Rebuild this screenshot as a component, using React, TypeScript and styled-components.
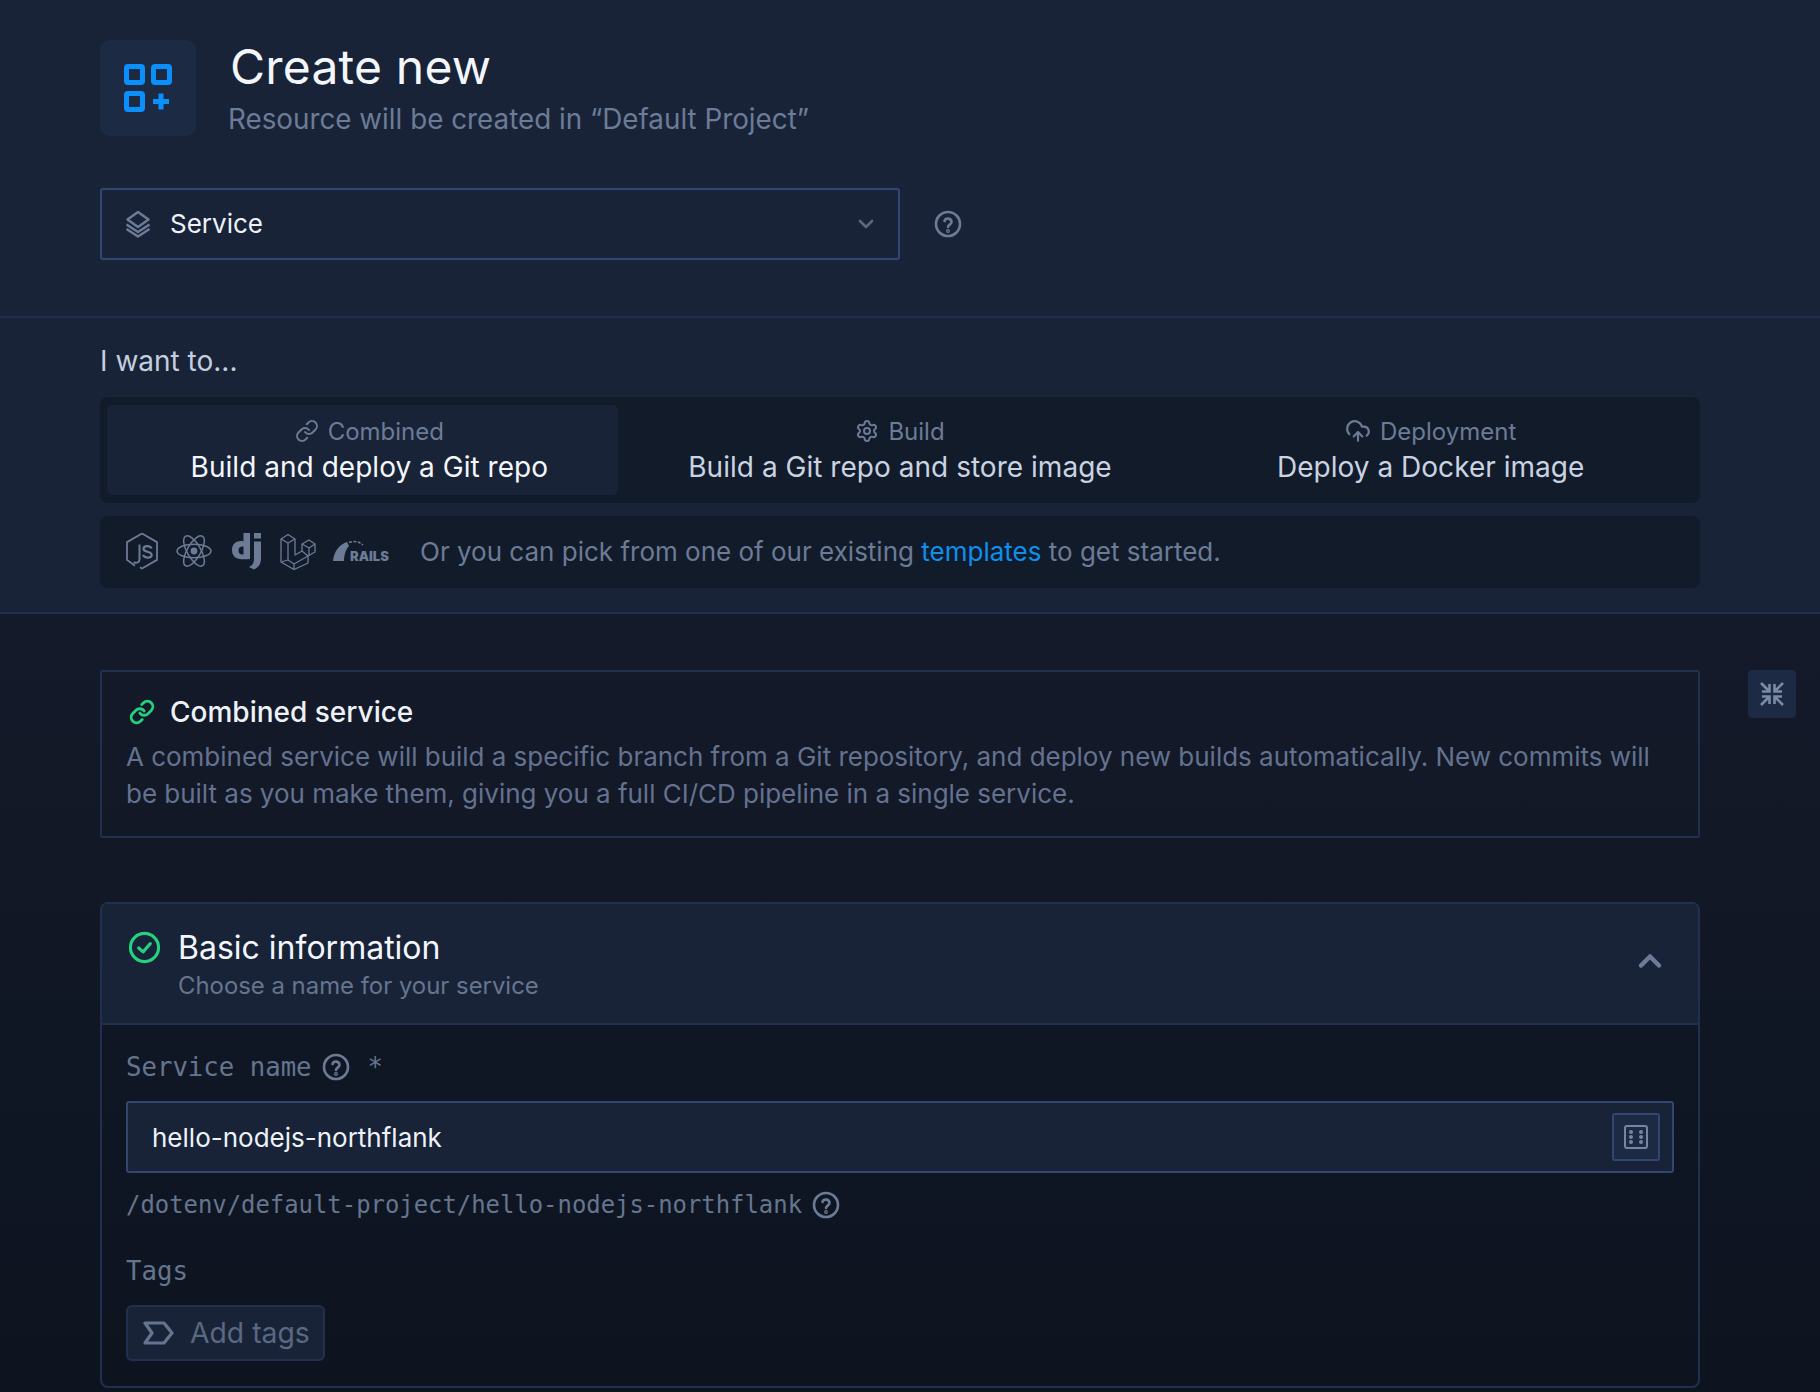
import React, { FC, ReactNode } from "react";
import styled, { createGlobalStyle } from "styled-components";
import { Link as LinkIcon, Settings, CloudUpload, ChevronDown, ChevronUp } from "lucide-react";

const GlobalStyle = createGlobalStyle`
  html, body {
    margin: 0;
    padding: 0;
    background: #0e1521;
    font-family: Inter, "Liberation Sans", sans-serif;
  }
  * { box-sizing: border-box; }
`;

const Page = styled.div`
  width: 1820px;
  height: 1392px;
  overflow: hidden;
  display: flex;
  flex-direction: column;
  background: linear-gradient(180deg, #141a29 612px, #0d1420 1392px);
`;

const TopBand = styled.section`
  background: #182338;
  border-bottom: 2px solid #212f4e;
  padding: 40px 120px 0 100px;
  height: 318px;
`;

const SecondBand = styled.section`
  background: #182338;
  border-bottom: 2px solid #212f4e;
  padding: 25px 120px 0 100px;
  height: 296px;
`;

const Header = styled.header`
  display: flex;
  gap: 32px;
`;

const IconTile = styled.div`
  width: 96px;
  height: 96px;
  border-radius: 10px;
  background: #1c2a43;
  display: flex;
  align-items: center;
  justify-content: center;
`;

const HeaderText = styled.div`
  display: flex;
  flex-direction: column;
`;

const Title = styled.h1`
  margin: -1px 0 0 2px;
  font-size: 48px;
  line-height: 56px;
  font-weight: 400;
  letter-spacing: 0.2px;
  color: #f3f6fb;
`;

const Subtitle = styled.p`
  margin: 6px 0 0;
  font-size: 27.8px;
  line-height: 36px;
  color: #6c7b96;
`;

const SelectRow = styled.div`
  display: flex;
  align-items: center;
  gap: 34px;
  margin-top: 51px;
`;

const Select = styled.div`
  width: 800px;
  height: 72px;
  border: 2px solid #33466f;
  border-radius: 3px;
  display: flex;
  align-items: center;
  padding: 0 22px;
  color: #eef2f8;
  font-size: 26px;
`;

const SelectLabel = styled.span`
  flex: 1;
  margin: -1px 0 0 18px;
`;

const Muted = styled.span`
  display: inline-flex;
  color: #6c7b96;
`;

const SelectChevron = styled(Muted)`
  margin-right: -2px;
  color: #5a6880;
`;

const FormChevron = styled(Muted)`
  margin-top: 16px;
`;

const Prompt = styled.p`
  margin: 0;
  font-size: 28px;
  line-height: 36px;
  color: #c4cede;
`;

const Tabs = styled.div`
  margin-top: 18px;
  height: 106px;
  border-radius: 8px;
  background: #121b2a;
  padding: 8px 4px;
  display: grid;
  grid-template-columns: repeat(3, 1fr);
`;

const Tab = styled.div<{ $active?: boolean }>`
  position: relative;
  isolation: isolate;
  color: ${(p) => (p.$active ? "#f3f6fb" : "#c9d3e2")};
  display: flex;
  flex-direction: column;
  align-items: center;
  padding-top: 9px;

  &::before {
    content: "";
    position: absolute;
    z-index: -1;
    inset: 0 17px 0 3px;
    border-radius: 5px;
    background: ${(p) => (p.$active ? "#182338" : "transparent")};
  }
`;

const TabKind = styled.div`
  display: flex;
  align-items: center;
  gap: 9px;
  height: 34px;
  font-size: 24px;
  color: #6c7b96;
`;

const TabText = styled.div`
  font-size: 28px;
  line-height: 38px;
  letter-spacing: 0.03px;
`;

const TemplatesBar = styled.div`
  margin-top: 13px;
  height: 72px;
  padding: 0 25px 2px;
  border-radius: 8px;
  background: #121b2a;
  display: flex;
  align-items: center;
  color: #6c7b96;
`;

const Logos = styled.div`
  display: flex;
  align-items: center;
  gap: 17px;
  margin-right: 29px;
`;

const TemplatesText = styled.p`
  margin: 0;
  font-size: 26px;
`;

const TemplatesLink = styled.a`
  color: #0d8fee;
`;

const Body = styled.div`
  display: flex;
  gap: 48px;
  padding: 56px 24px 0 100px;
`;

const Column = styled.div`
  width: 1600px;
  display: flex;
  flex-direction: column;
  gap: 64px;
`;

const CollapseButton = styled.div`
  width: 48px;
  height: 48px;
  border-radius: 4px;
  background: #1c2a43;
  display: flex;
  align-items: center;
  justify-content: center;
  color: #7a8aa7;
`;

const InfoCard = styled.div`
  height: 168px;
  border: 2px solid #22304f;
  border-radius: 3px;
  padding: 22px 24px 0;
`;

const InfoHeading = styled.div`
  display: flex;
  align-items: center;
  gap: 15px;
  height: 36px;
  margin: 0 0 9px 3px;
  font-size: 28px;
  font-weight: 500;
  color: #eef2f8;
`;

const InfoText = styled.p`
  margin: 0;
  font-size: 26px;
  line-height: 36.5px;
  letter-spacing: -0.02px;
  color: #647290;
`;

const FormCard = styled.div`
  height: 486px;
  border: 2px solid #22304f;
  border-radius: 8px;
`;

const FormHeader = styled.div`
  height: 121px;
  border-bottom: 2px solid #22304f;
  background: #182338;
  border-radius: 6px 6px 0 0;
  display: flex;
  align-items: flex-start;
  padding: 23px 30px 0 26px;
  gap: 17px;
`;

const CheckSlot = styled.span`
  display: inline-flex;
  margin-top: 4px;
`;

const FormHeaderText = styled.div`
  flex: 1;
`;

const FormTitle = styled.h2`
  margin: 0;
  font-size: 32px;
  line-height: 42px;
  font-weight: 400;
  color: #f3f6fb;
`;

const FormSubtitle = styled.p`
  margin: 0;
  font-size: 23.9px;
  line-height: 33px;
  color: #66758f;
`;

const FormBody = styled.div`
  padding: 27px 24px 0;
`;

const FieldLabel = styled.div`
  display: flex;
  align-items: center;
  gap: 10px;
  height: 30px;
  font-family: "DejaVu Sans Mono", "Liberation Mono", monospace;
  font-size: 25.7px;
  color: #66758f;
`;

const Asterisk = styled.span`
  margin-left: 8px;
`;

const InputBox = styled.div`
  margin-top: 19px;
  height: 72px;
  border: 2px solid #33466f;
  border-radius: 3px;
  background: #182338;
  display: flex;
  align-items: center;
  justify-content: space-between;
  padding: 0 12px 0 24px;
  font-size: 26px;
  color: #eef2f8;
`;

const DiceButton = styled.div`
  width: 48px;
  height: 48px;
  border: 2px solid #33466f;
  border-radius: 3px;
  background: #1c2a43;
  display: flex;
  align-items: center;
  justify-content: center;
  color: #7686a2;
`;

const PathRow = styled.div`
  display: flex;
  align-items: center;
  gap: 10px;
  margin-top: 16px;
  height: 32px;
  font-family: "DejaVu Sans Mono", "Liberation Mono", monospace;
  font-size: 23.9px;
  color: #66758f;
`;

const TagsLabel = styled(FieldLabel)`
  margin-top: 35px;
`;

const AddTags = styled.div`
  margin-top: 19px;
  width: 199px;
  height: 56px;
  border: 2px solid #22304f;
  border-radius: 6px;
  background: #182338;
  display: flex;
  align-items: center;
  gap: 15px;
  padding-left: 15px;
  font-size: 28.3px;
  white-space: nowrap;
  color: #5a6880;

  svg {
    flex-shrink: 0;
  }
`;

const Help: FC = () => (
  <Muted>
    <svg width="28" height="28" viewBox="0 0 28 28" fill="none" stroke="currentColor" strokeWidth="2.6" strokeLinecap="round">
      <circle cx="14" cy="14" r="12" />
      <path d="M10.5 11a3.6 3.6 0 0 1 7 1c0 2.4-3.5 2.8-3.5 5" />
      <circle cx="14" cy="21" r="0.6" />
    </svg>
  </Muted>
);

const CreateIcon = () => (
  <svg width="48" height="48" viewBox="0 0 48 48" fill="none" stroke="#0a90fb" strokeWidth="5">
    <rect x="2.5" y="2.5" width="16" height="16" rx="1.5" />
    <rect x="29.5" y="2.5" width="16" height="16" rx="1.5" />
    <rect x="2.5" y="29.5" width="16" height="16" rx="1.5" />
    <path d="M29 37.5h16M37 29.5v16" />
  </svg>
);

const StackIcon = () => (
  <Muted>
    <svg width="28" height="28" viewBox="0 0 28 28" fill="none" stroke="currentColor" strokeWidth="2.5" strokeLinejoin="round">
      <path d="M14 2l10.5 7.5L14 17 3.5 9.5z" />
      <path d="M2.5 14.5L14 22l11.5-7.5" />
      <path d="M2.5 19L14 26.5 25.5 19" />
    </svg>
  </Muted>
);

const NodeLogo = () => (
  <svg width="34" height="38" viewBox="0 0 34 38" fill="none" stroke="currentColor" strokeWidth="1.8" strokeLinejoin="round">
    <path d="M17 1.5l15 8.6v17.8l-15 8.6-2-1.2" />
    <path d="M10 33.8l-8-5.9V10.1l15-8.6" />
    <path d="M14.5 12.5v15c0 3-2.5 3.5-6 3" strokeWidth="2" />
    <path d="M26.5 16.5c-.8-2.8-7.8-3.6-8 .2-.2 4 8.2 2.2 8.2 6.3 0 3.6-7.2 3.5-8.7-.2" strokeWidth="2.2" />
  </svg>
);

const ReactLogo = () => (
  <svg width="36" height="36" viewBox="-18 -18 36 36" fill="none" stroke="currentColor" strokeWidth="1.5">
    <circle r="3.4" fill="currentColor" stroke="none" />
    <ellipse rx="17" ry="6.8" />
    <ellipse rx="17" ry="6.8" transform="rotate(60)" />
    <ellipse rx="17" ry="6.8" transform="rotate(120)" />
  </svg>
);

const DjangoLogo = () => (
  <svg width="34" height="38" viewBox="0 0 34 38" fill="currentColor" fillRule="evenodd">
    <path d="M14.5 1H21v26c-6 .5-18 2-18-9 0-7 6-10 11.5-8.5zM14.5 14.5c-3-.5-5 1-5 4s2 4.5 5 4z" />
    <path d="M25 1h7v5.5h-7zM25 9.5h7V26c0 6-2 9-7 11.5L20 35c4-2 5-4 5-9z" />
  </svg>
);

const LaravelLogo = () => (
  <svg width="36" height="38" viewBox="0 0 36 38" fill="none" stroke="currentColor" strokeWidth="1.3" strokeLinejoin="round">
    <path d="M1 7l7-4.5L15 7v16l7-4v-7l7-4 6 4v8l-7 4v7l-14 6.5L1 30z" />
    <path d="M1 7l7 4 7-4M8 11v17l6 4 14-8M22 12l7 4 6-4M29 16v8M14 32v5.5M22 19l6 5M8 28l-7 2" />
  </svg>
);

const RailsLogo = () => (
  <svg width="58" height="24" viewBox="0 0 58 24" fill="currentColor">
    <path d="M0 22C1 12 7 5 14 3l2 4c-3 3-5 9-5 15z" />
    <path d="M16 3.5c5-2 10-1 14 2.5" fill="none" stroke="currentColor" strokeWidth="1.5" strokeDasharray="3 1.5" />
    <text x="17" y="22" fontFamily="Inter, sans-serif" fontSize="13" fontWeight="900">
      RAILS
    </text>
  </svg>
);

const CheckCircle = () => (
  <svg width="33" height="33" viewBox="0 0 34 34" fill="none" stroke="#25d17f" strokeWidth="3.2" strokeLinecap="round" strokeLinejoin="round">
    <circle cx="17" cy="17" r="14.5" />
    <path d="M11 17.5l4.5 4L23 13" />
  </svg>
);

const ShrinkIcon = () => (
  <svg width="26" height="26" viewBox="0 0 26 26" fill="none" stroke="currentColor" strokeWidth="2.6">
    <path d="M2 2l8 8M10.5 3v7.5H3" />
    <path d="M24 2l-8 8M15.5 3v7.5H23" />
    <path d="M2 24l8-8M10.5 23v-7.5H3" />
    <path d="M24 24l-8-8M15.5 23v-7.5H23" />
  </svg>
);

const DiceIcon = () => (
  <svg width="24" height="24" viewBox="0 0 24 24" fill="none" stroke="currentColor" strokeWidth="2">
    <rect x="1" y="1" width="22" height="22" rx="2" />
    <g fill="currentColor" stroke="none">
      <circle cx="7" cy="7" r="2" />
      <circle cx="7" cy="12" r="2" />
      <circle cx="7" cy="17" r="2" />
      <circle cx="17" cy="7" r="2" />
      <circle cx="17" cy="12" r="2" />
      <circle cx="17" cy="17" r="2" />
    </g>
  </svg>
);

const TagIcon = () => (
  <svg width="32" height="24" viewBox="0 0 32 24" fill="none" stroke="#66758f" strokeWidth="3.2" strokeLinejoin="round">
    <path d="M2 2h19l8 10-8 10H2l7-10z" />
  </svg>
);

const tabs: { kind: string; text: string; icon: ReactNode; active?: boolean }[] = [
  { kind: "Combined", text: "Build and deploy a Git repo", icon: <LinkIcon size={24} />, active: true },
  { kind: "Build", text: "Build a Git repo and store image", icon: <Settings size={24} /> },
  { kind: "Deployment", text: "Deploy a Docker image", icon: <CloudUpload size={26} /> },
];

const App: FC = () => (
  <Page>
    <GlobalStyle />
    <TopBand>
      <Header>
        <IconTile>
          <CreateIcon />
        </IconTile>
        <HeaderText>
          <Title>Create new</Title>
          <Subtitle>Resource will be created in “Default Project”</Subtitle>
        </HeaderText>
      </Header>
      <SelectRow>
        <Select>
          <StackIcon />
          <SelectLabel>Service</SelectLabel>
          <SelectChevron>
            <ChevronDown size={24} strokeWidth={2.6} />
          </SelectChevron>
        </Select>
        <Help />
      </SelectRow>
    </TopBand>
    <SecondBand>
      <Prompt>I want to...</Prompt>
      <Tabs>
        {tabs.map((tab) => (
          <Tab key={tab.kind} $active={tab.active}>
            <TabKind>
              {tab.icon}
              {tab.kind}
            </TabKind>
            <TabText>{tab.text}</TabText>
          </Tab>
        ))}
      </Tabs>
      <TemplatesBar>
        <Logos>
          <NodeLogo />
          <ReactLogo />
          <DjangoLogo />
          <LaravelLogo />
          <RailsLogo />
        </Logos>
        <TemplatesText>
          Or you can pick from one of our existing <TemplatesLink>templates</TemplatesLink> to get started.
        </TemplatesText>
      </TemplatesBar>
    </SecondBand>
    <Body>
      <Column>
        <InfoCard>
          <InfoHeading>
            <LinkIcon size={26} color="#25d17f" strokeWidth={2.6} />
            Combined service
          </InfoHeading>
          <InfoText>
            A combined service will build a specific branch from a Git repository, and deploy new builds automatically. New commits will be built as you make them, giving you a full CI/CD pipeline in a single service.
          </InfoText>
        </InfoCard>
        <FormCard>
          <FormHeader>
            <CheckSlot>
              <CheckCircle />
            </CheckSlot>
            <FormHeaderText>
              <FormTitle>Basic information</FormTitle>
              <FormSubtitle>Choose a name for your service</FormSubtitle>
            </FormHeaderText>
            <FormChevron>
              <ChevronUp size={36} strokeWidth={3} />
            </FormChevron>
          </FormHeader>
          <FormBody>
            <FieldLabel>
              Service name
              <Help />
              <Asterisk>*</Asterisk>
            </FieldLabel>
            <InputBox>
              hello-nodejs-northflank
              <DiceButton>
                <DiceIcon />
              </DiceButton>
            </InputBox>
            <PathRow>
              /dotenv/default-project/hello-nodejs-northflank
              <Help />
            </PathRow>
            <TagsLabel>Tags</TagsLabel>
            <AddTags>
              <TagIcon />
              Add tags
            </AddTags>
          </FormBody>
        </FormCard>
      </Column>
      <CollapseButton>
        <ShrinkIcon />
      </CollapseButton>
    </Body>
  </Page>
);

export default App;
